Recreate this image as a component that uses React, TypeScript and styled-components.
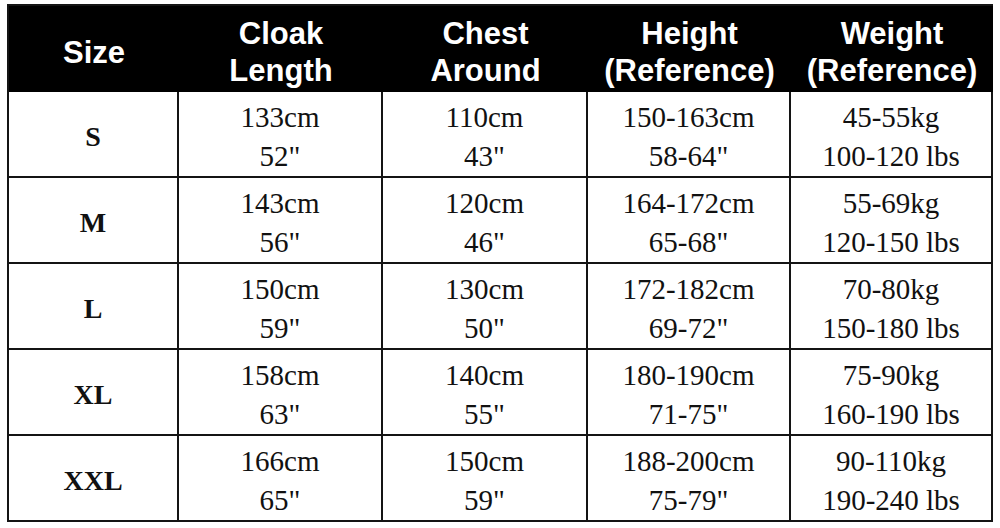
import styled, { createGlobalStyle } from "styled-components";

const GlobalStyle = createGlobalStyle`
  html, body {
    margin: 0;
    padding: 0;
    background: #fff;
  }
`;

const header = ["Size", "Cloak\nLength", "Chest\nAround", "Height\n(Reference)", "Weight\n(Reference)"];

const rows = [
  { size: "S", cells: [["133cm", '52"'], ["110cm", '43"'], ["150-163cm", '58-64"'], ["45-55kg", "100-120 lbs"]] },
  { size: "M", cells: [["143cm", '56"'], ["120cm", '46"'], ["164-172cm", '65-68"'], ["55-69kg", "120-150 lbs"]] },
  { size: "L", cells: [["150cm", '59"'], ["130cm", '50"'], ["172-182cm", '69-72"'], ["70-80kg", "150-180 lbs"]] },
  { size: "XL", cells: [["158cm", '63"'], ["140cm", '55"'], ["180-190cm", '71-75"'], ["75-90kg", "160-190 lbs"]] },
  { size: "XXL", cells: [["166cm", '65"'], ["150cm", '59"'], ["188-200cm", '75-79"'], ["90-110kg", "190-240 lbs"]] },
];

const App = () => {
  return (
    <>
      <GlobalStyle />
      <Page>
        <Table>
          {header.map((h) => (
            <HeadCell key={h}>
              {h.split("\n").map((line) => (
                <span key={line}>{line}</span>
              ))}
            </HeadCell>
          ))}
          {rows.map((r) => (
            <Row key={r.size}>
              <SizeCell>{r.size}</SizeCell>
              {r.cells.map((c, i) => (
                <Cell key={i}>
                  <span>{c[0]}</span>
                  <span>{c[1]}</span>
                </Cell>
              ))}
            </Row>
          ))}
        </Table>
      </Page>
    </>
  );
};

export default App;

const Page = styled.div`
  width: 1000px;
  height: 528px;
  padding: 4px 0 0 7px;
  box-sizing: border-box;
  background: #fff;
`;

const Table = styled.div`
  width: 986px;
  display: grid;
  grid-template-columns: 168px 202px 203px 201px 200px;
  grid-auto-rows: 84px;
  gap: 2px;
  padding: 2px;
  box-sizing: border-box;
  background: #141414;
`;

const Row = styled.div`
  display: contents;
`;

const HeadCell = styled.div`
  background: #000;
  color: #fff;
  font-family: "Liberation Sans", Arial, sans-serif;
  font-weight: bold;
  font-size: 31px;
  line-height: 37px;
  display: flex;
  flex-direction: column;
  align-items: center;
  justify-content: center;
  text-align: center;
  margin: 0 -2px -2px 0;
  padding-top: 6px;
  &:last-of-type {
    margin-right: 0;
  }
`;

const Cell = styled.div`
  background: #fff;
  color: #111;
  font-family: "Liberation Serif", "Times New Roman", serif;
  font-size: 29px;
  line-height: 39px;
  display: flex;
  flex-direction: column;
  align-items: center;
  justify-content: center;
  padding-top: 6px;
`;

const SizeCell = styled(Cell)`
  font-weight: bold;
  font-size: 28px;
  padding-top: 4px;
`;
